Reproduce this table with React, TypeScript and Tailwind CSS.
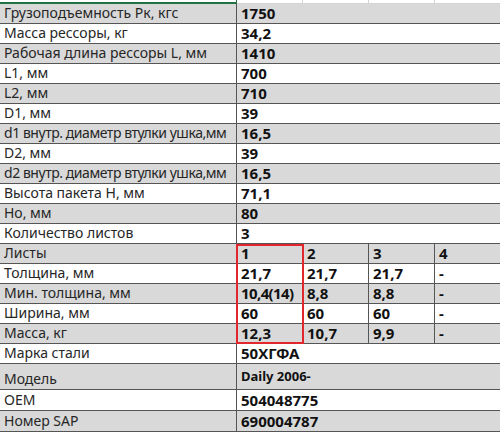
import React from 'react';

type Row = { label: string; value?: string; cells?: string[]; h?: string; tight?: boolean };

const top: Row[] = [
  { label: 'Грузоподъемность Рк, кгс', value: '1750' },
  { label: 'Масса рессоры, кг', value: '34,2' },
  { label: 'Рабочая длина рессоры L, мм', value: '1410' },
  { label: 'L1, мм', value: '700' },
  { label: 'L2, мм', value: '710' },
  { label: 'D1, мм', value: '39' },
  { label: 'd1 внутр. диаметр втулки ушка,мм', value: '16,5', tight: true },
  { label: 'D2, мм', value: '39' },
  { label: 'd2 внутр. диаметр втулки ушка,мм', value: '16,5', tight: true },
  { label: 'Высота пакета H, мм', value: '71,1' },
  { label: 'Hо, мм', value: '80' },
  { label: 'Количество листов', value: '3' },
];

const leaves: Row[] = [
  { label: 'Листы', cells: ['1', '2', '3', '4'] },
  { label: 'Толщина, мм', cells: ['21,7', '21,7', '21,7', '-'] },
  { label: 'Мин. толщина, мм', cells: ['10,4(14)', '8,8', '8,8', '-'] },
  { label: 'Ширина, мм', cells: ['60', '60', '60', '-'] },
  { label: 'Масса, кг', cells: ['12,3', '10,7', '9,9', '-'] },
];

const bottom: Row[] = [
  { label: 'Марка стали', value: '50ХГФА' },
  { label: 'Модель', value: 'Daily 2006-', h: 'tall' },
  { label: 'OEM', value: '504048775', h: 'mid' },
  { label: 'Номер SAP', value: '690004787', h: 'mid' },
];

function rowBg(i: number) {
  return i % 2 === 0 ? 'bg-[#d9d9d9]' : 'bg-white';
}

function Line({ row, idx }: { row: Row; idx: number }) {
  const height = row.h === 'tall' ? 'h-[26px]' : row.h === 'mid' ? 'h-[21px]' : 'h-[20px]';
  return (
    <div className={`flex ${height} border-b border-[#555] ${rowBg(idx)}`}>
      <div
        className={`w-[237px] shrink-0 border-r border-[#555] pl-[4px] flex items-end pb-[1px] whitespace-nowrap overflow-hidden text-[14px] leading-[18px] text-[#262626] ${
          row.tight ? 'tracking-[-0.45px]' : ''
        }`}
      >
        {row.label}
      </div>
      {row.cells ? (
        row.cells.map((c, i) => (
          <div
            key={i}
            className={`${i < 3 ? 'w-[66px] shrink-0 border-r border-[#555]' : 'flex-1'} pl-[4px] flex items-end pb-[1px] whitespace-nowrap overflow-hidden text-[15px] leading-[18px] font-bold text-[#111] ${
              c.length > 6 ? 'tracking-[-0.6px]' : ''
            }`}
          >
            {c}
          </div>
        ))
      ) : (
        <div
          className={`flex-1 pl-[4px] flex pb-[1px] whitespace-nowrap font-bold text-[#111] ${
            row.h === 'tall' ? 'items-start pt-[4px] text-[13px] leading-[17px]' : 'items-end text-[15px] leading-[18px]'
          }`}
        >
          {row.value}
        </div>
      )}
    </div>
  );
}

export default function App() {
  let n = 0;
  return (
    <div className="w-[500px] h-[432px] overflow-hidden bg-white" style={{ fontFamily: '"Noto Sans", "Open Sans", sans-serif' }}>
      {/* sheet row above the table */}
      <div className="flex h-[4px]">
        <div className="w-[237px] shrink-0 border-b-2 border-r border-[#217346]" />
        <div className="w-[66px] shrink-0 border-r border-b border-[#d4d4d4]" />
        <div className="w-[66px] shrink-0 border-r border-b border-[#d4d4d4]" />
        <div className="w-[66px] shrink-0 border-r border-b border-[#d4d4d4]" />
        <div className="flex-1 border-b border-[#d4d4d4]" />
      </div>
      {top.map((r) => (
        <Line key={r.label} row={r} idx={n++} />
      ))}
      <div className="relative">
        {leaves.map((r) => (
          <Line key={r.label} row={r} idx={n++} />
        ))}
        <div className="absolute left-[236px] top-[0px] w-[68px] h-[100px] border-2 border-[#e3262b] pointer-events-none" />
      </div>
      {bottom.map((r) => (
        <Line key={r.label} row={r} idx={n++} />
      ))}
    </div>
  );
}
